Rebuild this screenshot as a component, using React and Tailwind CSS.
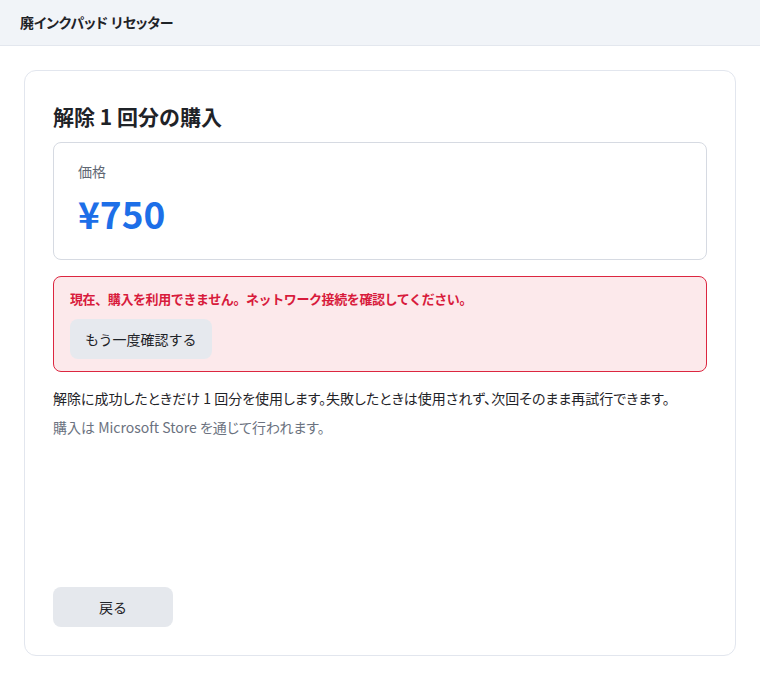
export default function App() {
  return (
    <div
      className="min-h-[680px] bg-white text-[#1f2328]"
      style={{ fontFamily: '"Noto Sans CJK JP", "Noto Sans", sans-serif' }}
    >
      {/* header */}
      <div className="h-[46px] bg-[#f1f4f8] border-b border-[#e3e7ee] flex items-center px-5">
        <h1 className="text-[14px] font-bold text-[#1f2328] [font-feature-settings:'palt'] tracking-[-0.2px]">
          廃インクパッド リセッター
        </h1>
      </div>

      <div className="px-6 pt-6">
        <div className="h-[586px] border border-[#e2e6ee] rounded-xl px-7 pt-[31px] pb-7 flex flex-col">
          <h2 className="text-[21px] leading-7 font-bold mb-3">解除 1 回分の購入</h2>

          <div className="border border-[#d6dae2] rounded-lg px-6 pt-[18px] pb-[22px]">
            <p className="text-[14px] leading-5 text-[#5f6773]">価格</p>
            <p className="mt-2 text-[37px] leading-[48px] font-bold text-[#1d6fe8]">¥750</p>
          </div>

          <div className="mt-4 bg-[#fce9eb] border border-[#dc2640] rounded-lg px-4 py-3">
            <p className="text-[13px] leading-5 font-bold text-[#d81b3c] tracking-[-0.4px]">
              現在、購入を利用できません。ネットワーク接続を確認してください。
            </p>
            <button className="mt-[10px] h-10 px-[15px] rounded-lg bg-[#e6e9ee] text-[14px] text-[#1f2328]">
              もう一度確認する
            </button>
          </div>

          <p className="mt-4 text-[14px] leading-5 text-[#1f2328] [font-feature-settings:'palt']">
            解除に成功したときだけ 1 回分を使用します。失敗したときは使用されず、次回そのまま再試行できます。
          </p>
          <p className="mt-[9px] text-[14px] leading-5 text-[#6b7280] [font-feature-settings:'palt']">
            購入は Microsoft Store を通じて行われます。
          </p>

          <div className="mt-auto">
            <button className="w-[120px] h-10 rounded-lg bg-[#e5e8ed] text-[14px] text-[#1f2328]">
              戻る
            </button>
          </div>
        </div>
      </div>
    </div>
  );
}
